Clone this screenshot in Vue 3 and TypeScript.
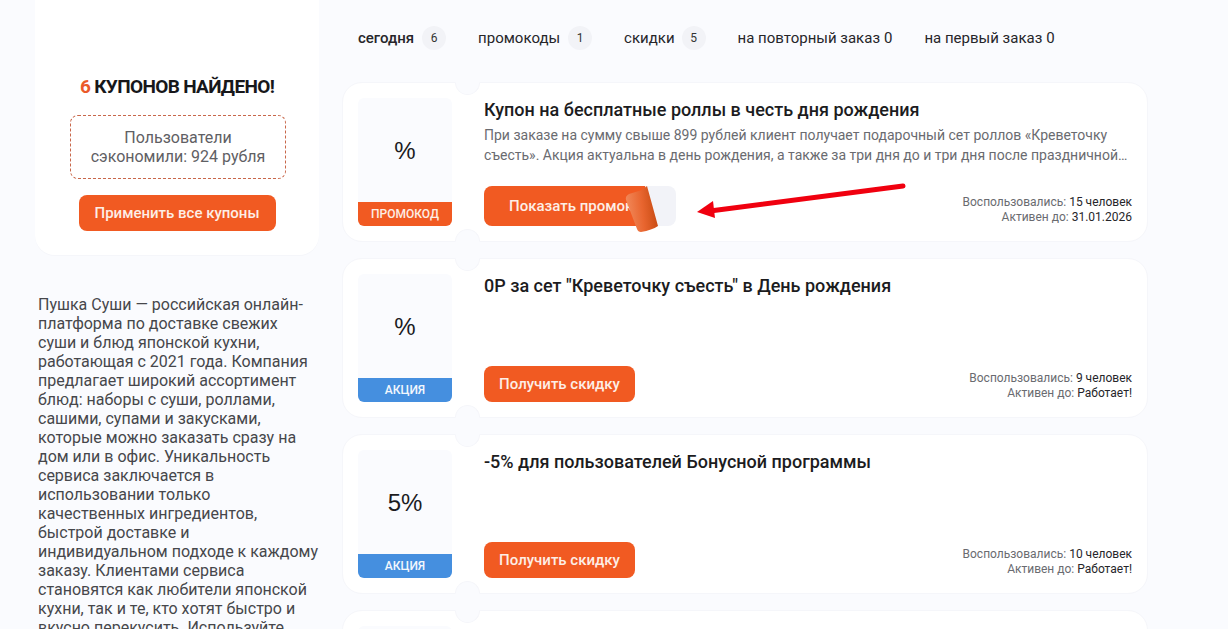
<script setup lang="ts">
interface Tab {
  name: string;
  count: number;
  inline?: boolean;
}

interface Coupon {
  value: string;
  kind: 'promo' | 'sale';
  label: string;
  title: string;
  text?: string;
  used: string;
  until: string;
}

const tabs: Tab[] = [
  { name: 'сегодня', count: 6 },
  { name: 'промокоды', count: 1 },
  { name: 'скидки', count: 5 },
  { name: 'на повторный заказ', count: 0, inline: true },
  { name: 'на первый заказ', count: 0, inline: true },
];

const coupons: Coupon[] = [
  {
    value: '%',
    kind: 'promo',
    label: 'ПРОМОКОД',
    title: 'Купон на бесплатные роллы в честь дня рождения',
    text: 'При заказе на сумму свыше 899 рублей клиент получает подарочный сет роллов «Креветочку съесть». Акция актуальна в день рождения, а также за три дня до и три дня после праздничной даты, при условии предъявления документа.',
    used: '15 человек',
    until: '31.01.2026',
  },
  {
    value: '%',
    kind: 'sale',
    label: 'АКЦИЯ',
    title: '0Р за сет "Креветочку съесть" в День рождения',
    used: '9 человек',
    until: 'Работает!',
  },
  {
    value: '5%',
    kind: 'sale',
    label: 'АКЦИЯ',
    title: '-5% для пользователей Бонусной программы',
    used: '10 человек',
    until: 'Работает!',
  },
  {
    value: '%',
    kind: 'sale',
    label: 'АКЦИЯ',
    title: '',
    used: '',
    until: '',
  },
];

const about =
  'Пушка Суши — российская онлайн-платформа по доставке свежих суши и блюд японской кухни, работающая с 2021 года. Компания предлагает широкий ассортимент блюд: наборы с суши, роллами, сашими, супами и закусками, которые можно заказать сразу на дом или в офис. Уникальность сервиса заключается в использовании только качественных ингредиентов, быстрой доставке и индивидуальном подходе к каждому заказу. Клиентами сервиса становятся как любители японской кухни, так и те, кто хотят быстро и вкусно перекусить. Используйте промокоды и экономьте на заказах.';
</script>

<template>
  <div class="page">
    <aside class="side">
      <section class="summary">
        <h2 class="found"><span>6</span> КУПОНОВ НАЙДЕНО!</h2>
        <p class="saved">Пользователи сэкономили: 924 рубля</p>
        <button class="btn apply">Применить все купоны</button>
      </section>
      <p class="about">{{ about }}</p>
    </aside>

    <main class="main">
      <nav class="tabs">
        <div v-for="(tab, i) in tabs" :key="tab.name" class="tab" :class="{ active: i === 0 }">
          <span>{{ tab.name }}</span>
          <span v-if="tab.inline">{{ tab.count }}</span>
          <span v-else class="count">{{ tab.count }}</span>
        </div>
      </nav>

      <div class="list">
        <article v-for="(c, i) in coupons" :key="i" class="card">
          <i class="notch top"></i>
          <i class="notch bottom"></i>
          <div class="thumb">
            <div class="value">{{ c.value }}</div>
            <div class="label" :class="c.kind">{{ c.label }}</div>
          </div>
          <div class="body">
            <h3 class="title">{{ c.title }}</h3>
            <p v-if="c.text" class="text">{{ c.text }}</p>
            <div class="foot">
              <div v-if="c.kind === 'promo'" class="reveal">
                <button class="btn show">Показать промокод</button>
                <svg class="peel" width="40" height="50" viewBox="0 0 40 50">
                  <defs>
                    <linearGradient id="peel" x1="0" y1="0.45" x2="1" y2="0.3">
                      <stop offset="0" stop-color="#f2895a" />
                      <stop offset="0.5" stop-color="#e8652f" />
                      <stop offset="1" stop-color="#c4480f" />
                    </linearGradient>
                  </defs>
                  <path
                    d="M25 3 L36 43 Q30 47 19 49 Q16 49 15 46 L4 17 Q3 13 7 11 L20 7 Z"
                    fill="url(#peel)"
                  />
                </svg>
              </div>
              <button v-else class="btn get">Получить скидку</button>
              <div class="meta">
                <div>Воспользовались: <b>{{ c.used }}</b></div>
                <div>Активен до: <b>{{ c.until }}</b></div>
              </div>
            </div>
          </div>
        </article>
      </div>
    </main>

    <svg class="arrow" width="216" height="40" viewBox="0 0 216 40">
      <path d="M209 5 L16 30" fill="none" stroke="#f0000f" stroke-width="5" stroke-linecap="round" />
      <path d="M3 31 L19 20 L21 37 Z" fill="#f0000f" />
    </svg>
  </div>
</template>

<style>
html,
body {
  margin: 0;
  background: #fafbfe;
}
</style>

<style scoped>
.page {
  position: relative;
  display: flex;
  gap: 23px;
  height: 629px;
  padding-left: 35px;
  overflow: hidden;
  background: #fafbfe;
  color: #1c1c1e;
  font-family: Roboto, "Liberation Sans", sans-serif;
}

.side {
  width: 284px;
  flex: none;
}

.summary {
  height: 255px;
  box-sizing: border-box;
  padding-top: 76px;
  display: flex;
  flex-direction: column;
  align-items: center;
  background: #fff;
  border-radius: 0 0 20px 20px;
  box-shadow: 0 1px 0 #f5f6fa;
}

.found {
  margin: 0;
  font-size: 19px;
  line-height: 22px;
  font-weight: 700;
  letter-spacing: -0.65px;
  color: #17171a;
}

.found span {
  color: #ea5a2a;
}

.saved {
  margin: 17px 0 0 2px;
  width: 216px;
  box-sizing: border-box;
  height: 64px;
  padding: 12px 10px 0;
  border: 1px dashed #c8674a;
  border-radius: 8px;
  text-align: center;
  font-size: 16px;
  line-height: 19px;
  color: #5f6064;
}

.btn {
  border: 0;
  border-radius: 8px;
  background: #f15a22;
  color: #fdeee6;
  font-family: inherit;
  font-size: 15px;
  font-weight: 500;
  padding: 0;
}

.apply {
  margin-top: 16px;
  width: 197px;
  height: 36px;
}

.about {
  margin: 40px 0 0 3px;
  font-size: 16px;
  line-height: 19px;
  color: #46474b;
}

.main {
  width: 806px;
  flex: none;
}

.tabs {
  display: flex;
  height: 82px;
  padding: 26px 0 0 16px;
  box-sizing: border-box;
  align-items: flex-start;
  gap: 32px;
  font-size: 15px;
  line-height: 24px;
  color: #26262a;
}

.tab {
  display: flex;
  align-items: center;
  gap: 8px;
}

.tab:nth-child(3) {
  gap: 7px;
}

.tab:nth-child(n + 4) {
  gap: 4px;
}

.tab.active {
  font-weight: 500;
}

.count {
  width: 24px;
  height: 24px;
  line-height: 24px;
  border-radius: 50%;
  background: #f2f3f7;
  text-align: center;
  font-size: 12px;
  font-weight: 400;
  color: #333;
}

.list {
  display: flex;
  flex-direction: column;
  gap: 16px;
}

.card {
  position: relative;
  flex: none;
  display: flex;
  height: 160px;
  box-sizing: border-box;
  padding: 15px;
  background: #fff;
  border: 1px solid #f5f6fa;
  border-radius: 20px;
}

.notch {
  position: absolute;
  left: 112px;
  width: 25px;
  height: 13px;
  box-sizing: border-box;
  background: #fafbfe;
  border: 1px solid #f5f6fa;
}

.notch.top {
  top: -1px;
  border-top-color: #fafbfe;
  border-radius: 0 0 13px 13px;
}

.notch.bottom {
  bottom: -1px;
  border-bottom-color: #fafbfe;
  border-radius: 13px 13px 0 0;
}

.thumb {
  width: 94px;
  flex: none;
  display: flex;
  flex-direction: column;
  background: #fafbfe;
  border-radius: 6px;
}

.value {
  flex: 1;
  display: flex;
  align-items: center;
  justify-content: center;
  padding-top: 1px;
  font-size: 24px;
  color: #1c1c1e;
  font-family: "Liberation Sans", sans-serif;
}

.label {
  height: 24px;
  line-height: 24px;
  text-align: center;
  font-size: 12px;
  font-weight: 500;
  color: #fdeee6;
  border-radius: 0 0 6px 6px;
}

.label.promo {
  background: #f15a22;
}

.label.sale {
  background: #458fdf;
  color: #f2f7fd;
}

.body {
  flex: 1;
  min-width: 0;
  display: flex;
  flex-direction: column;
  margin-left: 32px;
}

.title {
  margin: 0;
  font-size: 18px;
  line-height: 24px;
  font-weight: 500;
  color: #1c1c1e;
}

.text {
  margin: 3px 0 0;
  font-size: 14px;
  line-height: 20px;
  color: #6a6b70;
  display: -webkit-box;
  -webkit-box-orient: vertical;
  -webkit-line-clamp: 2;
  overflow: hidden;
}

.foot {
  margin-top: auto;
  display: flex;
  justify-content: space-between;
  align-items: flex-end;
}

.get {
  width: 151px;
  height: 36px;
}

.reveal {
  position: relative;
  width: 192px;
  height: 40px;
  border-radius: 8px;
  background: #f2f3f8;
}

.show {
  display: block;
  width: 100%;
  height: 100%;
  padding-left: 25px;
  text-align: left;
  white-space: nowrap;
  overflow: hidden;
  clip-path: polygon(0 0, 161px 0, 171px 40px, 0 40px);
}

.peel {
  position: absolute;
  left: 138px;
  top: -3px;
}

.meta {
  margin-bottom: 1px;
  text-align: right;
  font-size: 12px;
  line-height: 15px;
  color: #6a6b70;
}

.meta b {
  font-weight: 400;
  color: #26262a;
}

.arrow {
  position: absolute;
  left: 694px;
  top: 181px;
}
</style>
